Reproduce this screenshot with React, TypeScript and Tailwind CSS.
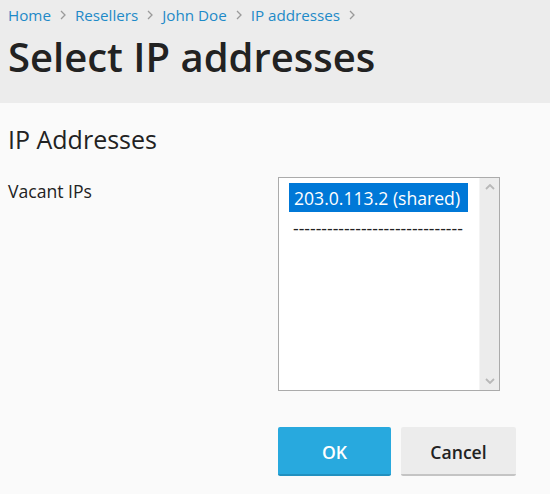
import React from "react";

const Chevron = () => (
  <svg width="8" height="10" viewBox="0 0 8 10" className="mx-[8px]" fill="none">
    <path d="M2 1l4 4-4 4" stroke="#9a9a9a" strokeWidth="1.3" />
  </svg>
);

export default function App() {
  const crumbs = ["Home", "Resellers", "John Doe", "IP addresses"];
  return (
    <div className="w-[550px] h-[494px] bg-[#fafafa] text-[#222]" style={{ fontFamily: '"Open Sans", sans-serif' }}>
      <div className="bg-[#ececec] h-[103px] px-2 pt-[4px]">
        <div className="flex items-center h-[22px] text-[15.2px] text-[#1e8ac8]">
          {crumbs.map((c) => (
            <React.Fragment key={c}>
              <span>{c}</span>
              <Chevron />
            </React.Fragment>
          ))}
        </div>
        <h1 className="text-[40px] font-semibold leading-[48px] mt-[7px] text-[#222]">Select IP addresses</h1>
      </div>
      <div className="px-2">
        <h2 className="text-[25px] font-normal leading-[32px] mt-[20px] text-[#222]">IP Addresses</h2>
        <div className="flex mt-[22px]">
          <div className="w-[270px] text-[17.6px] leading-[24px] pt-[2px]">Vacant IPs</div>
          <div className="w-[222px] h-[214px] border border-[#ababab] bg-white flex">
            <div className="flex-1 pl-[10px] pt-[5px]">
              <div className="w-[179px] h-[29px] bg-[#0078d7] text-white text-[17.6px] leading-[29px] pl-[5px] pt-[1px]">
                203.0.113.2 (shared)
              </div>
              <div className="text-[17.6px] leading-[24px] pl-[4px] mt-[4px] text-[#222]">
                ------------------------------
              </div>
            </div>
            <div className="w-[20px] bg-[#ececec] border-l border-[#f4f4f4] flex flex-col justify-between items-center py-[6px]">
              <svg width="10" height="6" viewBox="0 0 10 6" fill="none">
                <path d="M1 5l4-4 4 4" stroke="#b8b8b8" strokeWidth="1.8" />
              </svg>
              <svg width="10" height="6" viewBox="0 0 10 6" fill="none">
                <path d="M1 1l4 4 4-4" stroke="#b8b8b8" strokeWidth="1.8" />
              </svg>
            </div>
          </div>
        </div>
        <div className="flex ml-[270px] mt-[36px] gap-[10px]">
          <button className="w-[113px] h-[49px] rounded-[2px] bg-[#28a9de] border-b-2 border-[#2190bf] text-white text-[17.6px] font-semibold pt-[4px]">
            OK
          </button>
          <button className="w-[115px] h-[49px] rounded-[2px] bg-[#ececec] border-b-2 border-[#c4c4c4] text-[#222] text-[17.6px] font-semibold pt-[4px]">
            Cancel
          </button>
        </div>
      </div>
    </div>
  );
}
